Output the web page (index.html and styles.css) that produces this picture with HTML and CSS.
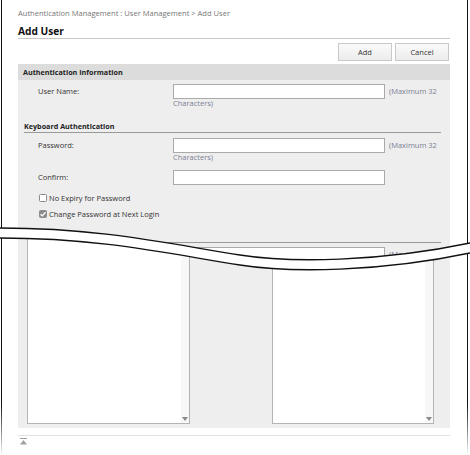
FILE: index.html
```html
<!DOCTYPE html>
<html>
<head>
<meta charset="utf-8">
<title>Add User</title>
<link rel="stylesheet" href="styles.css">
</head>
<body>
<div class="sheet">
  <div class="piece top">
    <div class="frame">
      <div class="crumb">Authentication Management : User Management &gt; Add User</div>
      <h1 class="title">Add User</h1>
      <div class="actions">
        <button class="btn" type="button">Add</button>
        <button class="btn" type="button">Cancel</button>
      </div>
      <section class="panel">
        <div class="panel-head">Authentication Information</div>
        <div class="panel-body">
          <div class="row">
            <div class="label">User Name:</div>
            <div class="field"><input class="input" type="text"> <span class="note">(Maximum 32 Characters)</span></div>
          </div>
          <div class="subhead">Keyboard Authentication</div>
          <div class="row r-pass">
            <div class="label">Password:</div>
            <div class="field"><input class="input" type="password"> <span class="note">(Maximum 32 Characters)</span></div>
          </div>
          <div class="row r-confirm">
            <div class="label">Confirm:</div>
            <div class="field"><input class="input" type="password"></div>
          </div>
          <div class="check c-first">
            <span class="cb"></span><span>No Expiry for Password</span>
          </div>
          <div class="check c-second">
            <span class="cb checked"><svg width="8" height="8" viewBox="0 0 8 8"><path d="M1.6 4.2 L3.3 5.9 L6.5 2.2" fill="none" stroke="#fff" stroke-width="1.3"/></svg></span><span>Change Password at Next Login</span>
          </div>
          <div class="subhead empty"></div>
          <div class="row r-next">
            <div class="label"></div>
            <div class="field"><input class="input" type="text"> <span class="note">(Maximum 32</span></div>
          </div>
        </div>
      </section>
    </div>
  </div>

  <div class="piece bottom">
    <div class="frame fade">
      <div class="panel-cont">
        <div class="listbox left">
          <div class="scroll"><svg width="6" height="4" viewBox="0 0 6 4"><path d="M0 0 H6 L3 4 Z" fill="#8a8a8a"/></svg></div>
        </div>
        <div class="listbox right">
          <div class="scroll"><svg width="6" height="4" viewBox="0 0 6 4"><path d="M0 0 H6 L3 4 Z" fill="#8a8a8a"/></svg></div>
        </div>
      </div>
      <div class="foot">
        <svg class="totop" width="7" height="7" viewBox="0 0 7 7"><rect x="0" y="0" width="7" height="1" fill="#a0a0a0"/><path d="M3.5 2 L7 6.5 H0 Z" fill="#a0a0a0"/></svg>
      </div>
    </div>
  </div>

  <svg class="tear" width="470" height="455" viewBox="0 0 470 455">
    <path d="M0,228 C100,228 170,244 240,255 C290,263 380,262 470,243"/>
    <path d="M0,238 C100,238 170,254 240,265 C290,273 380,272 470,253"/>
  </svg>
</div>
</body>
</html>
```

FILE: styles.css
```css
html, body {
  margin: 0;
  padding: 0;
  background: #fff;
}

body {
  font-family: "Open Sans", "Noto Sans", sans-serif;
  color: #333;
}

.sheet {
  position: relative;
  width: 470px;
  height: 455px;
  display: grid;
  grid-template-rows: 238px 27px 190px;
  grid-template-columns: 470px;
  overflow: hidden;
}

.piece {
  grid-column: 1;
  overflow: hidden;
}

.top {
  grid-row: 1 / 3;
  clip-path: path("M0 0 H470 V243 C380 262 290 263 240 255 C170 244 100 228 0 228 Z");
}

.bottom {
  grid-row: 2 / 4;
  clip-path: path("M0 0 C100 0 170 16 240 27 C290 35 380 34 470 15 V217 H0 Z");
}

.frame {
  margin-left: 1px;
  width: 467px;
  height: 100%;
  box-sizing: border-box;
  border-left: 1px solid #111;
  border-right: 1px solid #111;
  padding: 8px 17px 0 16px;
}

.frame.fade {
  padding-top: 0;
  border-image: linear-gradient(to bottom, #111 0%, #111 76%, rgba(17, 17, 17, 0.35) 92%, rgba(17, 17, 17, 0) 100%) 1;
}

.crumb {
  font-size: 7.55px;
  line-height: 10px;
  color: #777;
  white-space: nowrap;
}

.title {
  margin: 6px 0 0;
  font-size: 10.2px;
  font-weight: 700;
  line-height: 14px;
  color: #111;
  border-bottom: 1px solid #c8c8c8;
}

.actions {
  display: flex;
  justify-content: flex-end;
  gap: 3px;
  margin-top: 4px;
  padding-right: 1px;
}

.btn {
  width: 54px;
  height: 18px;
  margin: 0;
  padding: 0;
  border: 1px solid #c9c9c9;
  background: linear-gradient(to bottom, #fafafa, #ececec);
  font-family: inherit;
  font-size: 7.5px;
  color: #333;
}

.panel {
  margin-top: 3px;
  background: #eee;
}

.panel-head {
  height: 16px;
  line-height: 16px;
  padding-left: 5px;
  background: #dcdcdc;
  font-size: 7.2px;
  font-weight: 700;
  color: #222;
}

.panel-body {
  padding-top: 4px;
  padding-bottom: 20px;
}

.row {
  display: flex;
  align-items: flex-start;
}

.label {
  width: 155px;
  flex: none;
  box-sizing: border-box;
  padding-left: 20px;
  font-size: 7.5px;
  line-height: 15px;
}

.field {
  width: 268px;
  font-size: 7.5px;
  line-height: 9px;
}

.input {
  width: 212px;
  height: 15px;
  box-sizing: border-box;
  margin: 0 2px 0 0;
  padding: 0;
  border: 1px solid #aaa;
  background: #fff;
  vertical-align: middle;
}

.note {
  color: #7b7f95;
}

.subhead {
  margin: 13px 9px 0 6px;
  font-size: 7.2px;
  font-weight: 700;
  line-height: 11px;
  color: #222;
  border-bottom: 1px solid #999;
}

.subhead.empty {
  height: 11px;
  margin-top: 12px;
}

.r-pass {
  margin-top: 5px;
}

.r-confirm {
  margin-top: 8px;
}

.r-next {
  margin-top: 4px;
}

.check {
  display: flex;
  align-items: center;
  gap: 2px;
  padding-left: 21px;
  font-size: 7.5px;
  line-height: 10px;
}

.c-first {
  margin-top: 8px;
}

.c-second {
  margin-top: 6px;
}

.cb {
  width: 8px;
  height: 8px;
  box-sizing: border-box;
  border: 1px solid #8a8a8a;
  border-radius: 1.5px;
  background: #fff;
  display: flex;
  align-items: center;
  justify-content: center;
}

.cb.checked {
  background: #8c8c8c;
  border-color: #8c8c8c;
}

.cb svg {
  display: block;
  flex: none;
}

.panel-cont {
  height: 190px;
  box-sizing: border-box;
  padding: 0 16px 4px 9px;
  background: #eee;
  display: flex;
  justify-content: space-between;
}

.listbox {
  height: 186px;
  box-sizing: border-box;
  border: 1px solid #b4b4b4;
  border-top: 0;
  background: #fff;
  display: flex;
  justify-content: flex-end;
}

.listbox.left {
  width: 163px;
}

.listbox.right {
  width: 162px;
}

.scroll {
  width: 8px;
  background: #f7f7f7;
  display: flex;
  align-items: flex-end;
  justify-content: center;
  padding-bottom: 2px;
  box-sizing: border-box;
}

.scroll svg {
  display: block;
}

.foot {
  margin-top: 7px;
  border-top: 1px solid #e2e2e2;
  padding: 2px 0 0 2px;
}

.totop {
  display: block;
}

.tear {
  position: absolute;
  left: 0;
  top: 0;
  pointer-events: none;
}

.tear path {
  fill: none;
  stroke: #111;
  stroke-width: 1.3;
}
```
